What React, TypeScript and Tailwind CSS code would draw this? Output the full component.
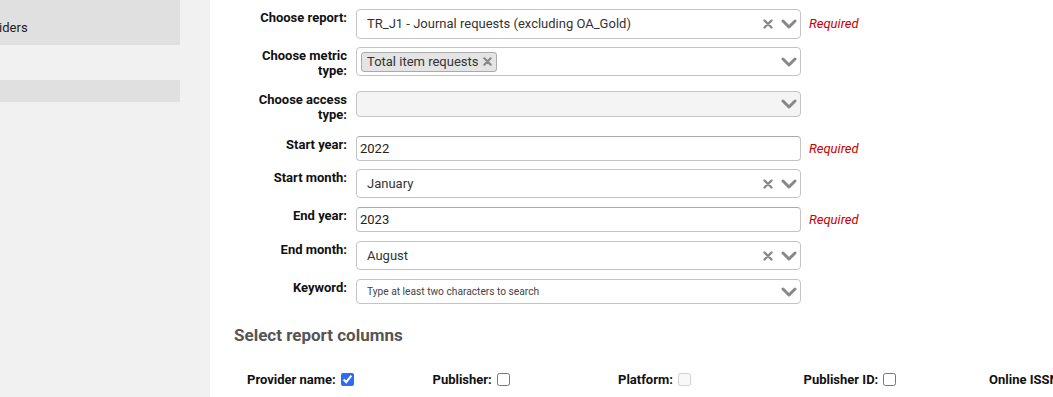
import React from "react";

// Report builder form (usage statistics) — sidebar is cut off on the left.

const Chevron = () => (
  <svg width="16" height="10" viewBox="0 0 16 10" aria-hidden>
    <polyline points="2,2 8,8 14,2" fill="none" stroke="#888" strokeWidth="3" strokeLinecap="round" strokeLinejoin="round" />
  </svg>
);

const Clear = ({ size = 10 }: { size?: number }) => (
  <svg width={size} height={size} viewBox="0 0 10 10" aria-hidden>
    <path d="M1.5 1.5 L8.5 8.5 M8.5 1.5 L1.5 8.5" stroke="#888" strokeWidth="2.4" strokeLinecap="round" />
  </svg>
);

function Required() {
  return <span className="ml-[8px] text-[13px] italic text-[#cc0000]">Required</span>;
}

function Row({
  label,
  children,
  required,
  className = "",
}: {
  label: React.ReactNode;
  children: React.ReactNode;
  required?: boolean;
  className?: string;
}) {
  return (
    <div className={`flex items-start ${className}`}>
      <label className="w-[113px] shrink-0 pt-[1px] text-right text-[13px] font-bold leading-[15px] text-[#111]">
        {label}
      </label>
      <div className="ml-[9px] flex items-center">
        {children}
        {required && <Required />}
      </div>
    </div>
  );
}

function Select({ value, clearable = true, h = "h-[30px]" }: { value: string; clearable?: boolean; h?: string }) {
  return (
    <div className={`flex w-[445px] ${h} items-center rounded-[4px] border border-[#c4c4c4] bg-white pl-[10px] pr-[3px]`}>
      <span className="flex-1 text-[13px] text-[#333]">{value}</span>
      {clearable && (
        <span className="mr-[8px] flex items-center">
          <Clear />
        </span>
      )}
      <Chevron />
    </div>
  );
}

function TextInput({ value }: { value: string }) {
  return (
    <div className="flex h-[25px] w-[445px] items-center rounded-[4px] border border-[#c4c4c4] border-t-[#a9a9a9] bg-white px-[3px] text-[13px] text-[#222]">
      {value}
    </div>
  );
}

const columns = [
  { label: "Provider name:", checked: true },
  { label: "Publisher:" },
  { label: "Platform:", disabled: true },
  { label: "Publisher ID:" },
  { label: "Online ISSN:" },
];

export default function App() {
  return (
    <div className="flex h-[397px] w-[1053px] overflow-hidden bg-white font-['Roboto',sans-serif] text-[#222]">
      <aside className="w-[210px] shrink-0 overflow-hidden bg-[#f0f1f0]">
        <div className="h-[45px] w-[180px] bg-[#e0e0e0] pt-[19px]">
          <span className="-ml-[27px] block text-[13px] leading-[18px] text-[#222]">Providers</span>
        </div>
        <div className="mt-[35px] h-[22px] w-[180px] bg-[#e0e0e0]" />
      </aside>

      <main className="min-w-0 flex-1 pl-[24px] pt-[9px]">
        <Row label="Choose report:" required className="mb-[8px]">
          <Select value="TR_J1 - Journal requests (excluding OA_Gold)" />
        </Row>

        <Row label="Choose metric type:" className="mb-[13px]">
          <div className="flex h-[29px] w-[445px] items-center rounded-[4px] border border-[#c4c4c4] bg-white pl-[4px] pr-[3px]">
            <span className="flex h-[20px] items-center gap-[5px] rounded-[3px] border border-[#aaa] bg-[#e4e4e4] pl-[5px] pr-[4px] text-[13px] text-[#333]">
              Total item requests
              <Clear size={9} />
            </span>
            <span className="flex-1" />
            <Chevron />
          </div>
        </Row>

        <Row label="Choose access type:" className="mb-[14px]">
          <div className="flex h-[26px] w-[445px] items-center justify-end rounded-[4px] border border-[#c4c4c4] bg-[#f4f4f4] pr-[3px]">
            <Chevron />
          </div>
        </Row>

        <Row label="Start year:" required className="mb-[8px]">
          <TextInput value="2022" />
        </Row>

        <Row label="Start month:" className="mb-[9px]">
          <Select value="January" h="h-[29px]" />
        </Row>

        <Row label="End year:" required className="mb-[9px]">
          <TextInput value="2023" />
        </Row>

        <Row label="End month:" className="mb-[9px]">
          <Select value="August" h="h-[29px]" />
        </Row>

        <Row label="Keyword:">
          <div className="flex h-[25px] w-[445px] items-center rounded-[4px] border border-[#c4c4c4] bg-white pl-[10px] pr-[3px]">
            <span className="flex-1 text-[10.2px] text-[#444]">Type at least two characters to search</span>
            <Chevron />
          </div>
        </Row>

        <h2 className="mt-[21px] text-[17px] font-bold leading-[20px] text-[#555]">Select report columns</h2>

        <div className="mt-[27px] flex">
          {columns.map((c) => (
            <div key={c.label} className="flex w-[185.5px] shrink-0 items-center gap-[5px] pl-[13px]">
              <span className="whitespace-nowrap text-[13px] font-bold leading-[15px] text-[#111]">{c.label}</span>
              <input
                type="checkbox"
                defaultChecked={c.checked}
                disabled={c.disabled}
                className="h-[13px] w-[13px] accent-[#2e6cf5]"
              />
            </div>
          ))}
        </div>
      </main>
    </div>
  );
}
